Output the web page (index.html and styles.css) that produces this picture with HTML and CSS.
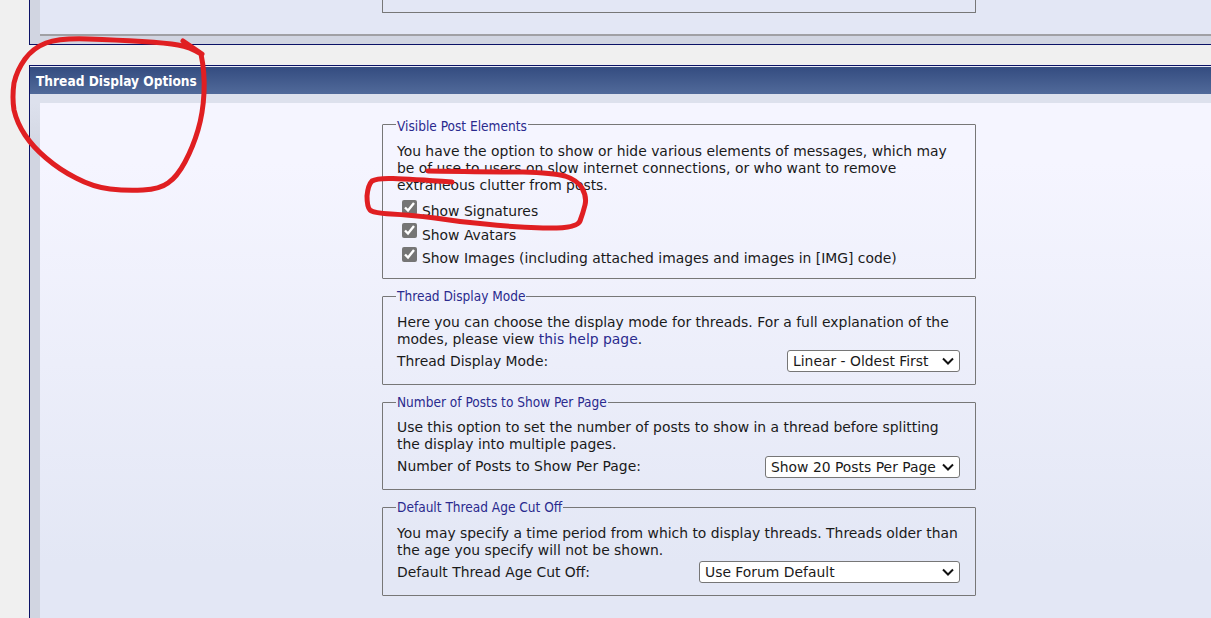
FILE: index.html
```html
<!DOCTYPE html>
<html lang="en">
<head>
<meta charset="utf-8">
<title>Thread Display Options</title>
<link rel="stylesheet" href="styles.css">
</head>
<body>
<div class="page">
  <div class="panel panel-top">
    <div class="panel-body panel-body-top">
      <div class="stub"></div>
    </div>
  </div>
  <div class="panel panel-main">
    <h2 class="panel-head">Thread Display Options</h2>
    <div class="panel-strip">
      <div class="panel-body panel-body-main">
        <fieldset class="group group-checks">
          <legend>Visible Post Elements</legend>
          <p>You have the option to show or hide various elements of messages, which may be of use to users on slow internet connections, or who want to remove extraneous clutter from posts.</p>
          <label class="check"><input type="checkbox" checked>Show Signatures</label>
          <label class="check"><input type="checkbox" checked>Show Avatars</label>
          <label class="check"><input type="checkbox" checked>Show Images (including attached images and images in [IMG] code)</label>
        </fieldset>
        <fieldset class="group">
          <legend>Thread Display Mode</legend>
          <p>Here you can choose the display mode for threads. For a full explanation of the modes, please view <a href="#">this help page</a>.</p>
          <div class="field">
            <span>Thread Display Mode:</span>
            <select class="sel-mode"><option>Linear - Oldest First</option></select>
          </div>
        </fieldset>
        <fieldset class="group">
          <legend>Number of Posts to Show Per Page</legend>
          <p>Use this option to set the number of posts to show in a thread before splitting the display into multiple pages.</p>
          <div class="field">
            <span>Number of Posts to Show Per Page:</span>
            <select class="sel-posts"><option>Show 20 Posts Per Page</option></select>
          </div>
        </fieldset>
        <fieldset class="group">
          <legend>Default Thread Age Cut Off</legend>
          <p>You may specify a time period from which to display threads. Threads older than the age you specify will not be shown.</p>
          <div class="field">
            <span>Default Thread Age Cut Off:</span>
            <select class="sel-age"><option>Use Forum Default</option></select>
          </div>
        </fieldset>
      </div>
    </div>
  </div>
  <svg class="ink" width="1211" height="618" viewBox="0 0 1211 618" aria-hidden="true">
    <path d="M201 54 Q190 47 178 45 Q167 43 142 41.5 Q117 40 88 39 Q60 38 46 43 Q33 48 25 59 Q17 70 14 83 Q12 97 14 110 Q17 123 25 135 Q33 147 46 158 Q60 170 76 178 Q93 187 110 189 Q127 191 143 190 Q160 189 168 183 Q177 177 185 162 Q193 147 198 130 Q203 113 204 93 Q205 73 201 54 M183 41 L202 54"/>
    <path d="M452 182 Q410 179 393 178.5 Q377 178 372 181 Q368 185 367 196 Q367 207 370 210 Q373 213 391 214 Q410 215 435 218 Q460 222 485 224 Q510 227 543 228 Q577 229 580 221 Q583 213 585 205 Q587 197 582 188 Q577 180 565 176 Q553 173 523 172 Q493 172 428 171"/>
  </svg>
</div>
</body>
</html>
```

FILE: styles.css
```css
html, body {
  margin: 0;
  padding: 0;
  background: #f0f0f0;
}
body {
  font-family: "DejaVu Sans", Verdana, sans-serif;
  font-size: 13.9px;
  line-height: 17px;
  color: #1a1a1a;
}
.page {
  position: relative;
  width: 1211px;
  height: 618px;
  overflow: hidden;
  box-sizing: border-box;
  padding-left: 29px;
}
.panel {
  width: 1300px;
  box-sizing: border-box;
  border-left: 1px solid #0b1266;
  background: #d1d5e1;
}
.panel-top {
  height: 45px;
  border-bottom: 1px solid #0b1266;
  padding: 0 0 9px 10px;
}
.panel-main {
  margin-top: 20px;
  border-top: 1px solid #0b1266;
  height: 553px;
}
.panel-head {
  margin: 0;
  height: 28px;
  box-sizing: border-box;
  border-top: 1px solid #e8ebf6;
  padding: 4px 0 0 6px;
  background: linear-gradient(#344c80, #516a9a);
  color: #fff;
  font-family: "DejaVu Sans Condensed", "DejaVu Sans", sans-serif;
  font-size: 13.6px;
  font-weight: bold;
  line-height: 20px;
}
.panel-strip {
  padding: 9px 0 0 10px;
  background: linear-gradient(#dde1ed 0, #dde1ed 9px, #d1d5e1 60px);
}
.panel-body {
  background: #e3e7f5;
}
.panel-body-top {
  border-bottom: 2px solid #a0a0a4;
  padding-left: 342px;
  height: 34px;
}
.stub {
  width: 594px;
  height: 13px;
  box-sizing: border-box;
  border: 1px solid #777;
  border-top: 0;
  border-radius: 0 0 1px 1px;
}
.panel-body-main {
  height: 520px;
  padding: 10px 0 0 342px;
  background: linear-gradient(#f5f5ff 0, #f5f5ff 60px, #e3e7f5 460px);
  display: flex;
  flex-direction: column;
  gap: 9px;
}
.group {
  width: 594px;
  box-sizing: border-box;
  margin: 0;
  padding: 0 14px 11.5px 14px;
  border: 1px solid #777;
  border-radius: 1px;
}
.group-checks {
  padding-bottom: 7.5px;
}
legend {
  padding: 0 1px;
  margin-left: -1px;
  color: #2a2a8e;
  font-family: "DejaVu Sans Condensed", "DejaVu Sans", sans-serif;
  font-size: 13.55px;
  line-height: 17px;
}
.group-checks legend {
  padding-top: 5px;
}
p {
  margin: 8.5px 0 0;
}
.group-checks p {
  margin-top: 8px;
}
a {
  color: #2a2a8e;
  text-decoration: none;
}
.check {
  display: flex;
  align-items: center;
  height: 23.5px;
  padding-left: 5px;
}
.check:first-of-type {
  margin-top: 6px;
}
.check input {
  width: 15px;
  height: 15px;
  margin: -9px 5px 0 0;
  accent-color: #757575;
}
.field {
  display: flex;
  justify-content: space-between;
  align-items: center;
  height: 22px;
  margin-top: 2.5px;
  padding-right: 1px;
}
select {
  appearance: none;
  height: 22px;
  padding: 0 0 0 5px;
  font-family: inherit;
  font-size: 13.9px;
  color: #1a1a1a;
  background: #fff url("data:image/svg+xml,%3Csvg xmlns='http://www.w3.org/2000/svg' width='12' height='8' viewBox='0 0 12 8'%3E%3Cpath d='M1 1.5 L6 6.5 L11 1.5' fill='none' stroke='%23111' stroke-width='2'/%3E%3C/svg%3E") no-repeat right 5px center;
  border: 1px solid #767676;
  border-radius: 3px;
}
.sel-mode { width: 173px; }
.sel-posts { width: 195px; }
.sel-age { width: 261px; }
.ink {
  position: absolute;
  left: 0;
  top: 0;
  fill: none;
  stroke: #e01f22;
  stroke-width: 5;
  stroke-linecap: round;
  stroke-linejoin: round;
}
```
